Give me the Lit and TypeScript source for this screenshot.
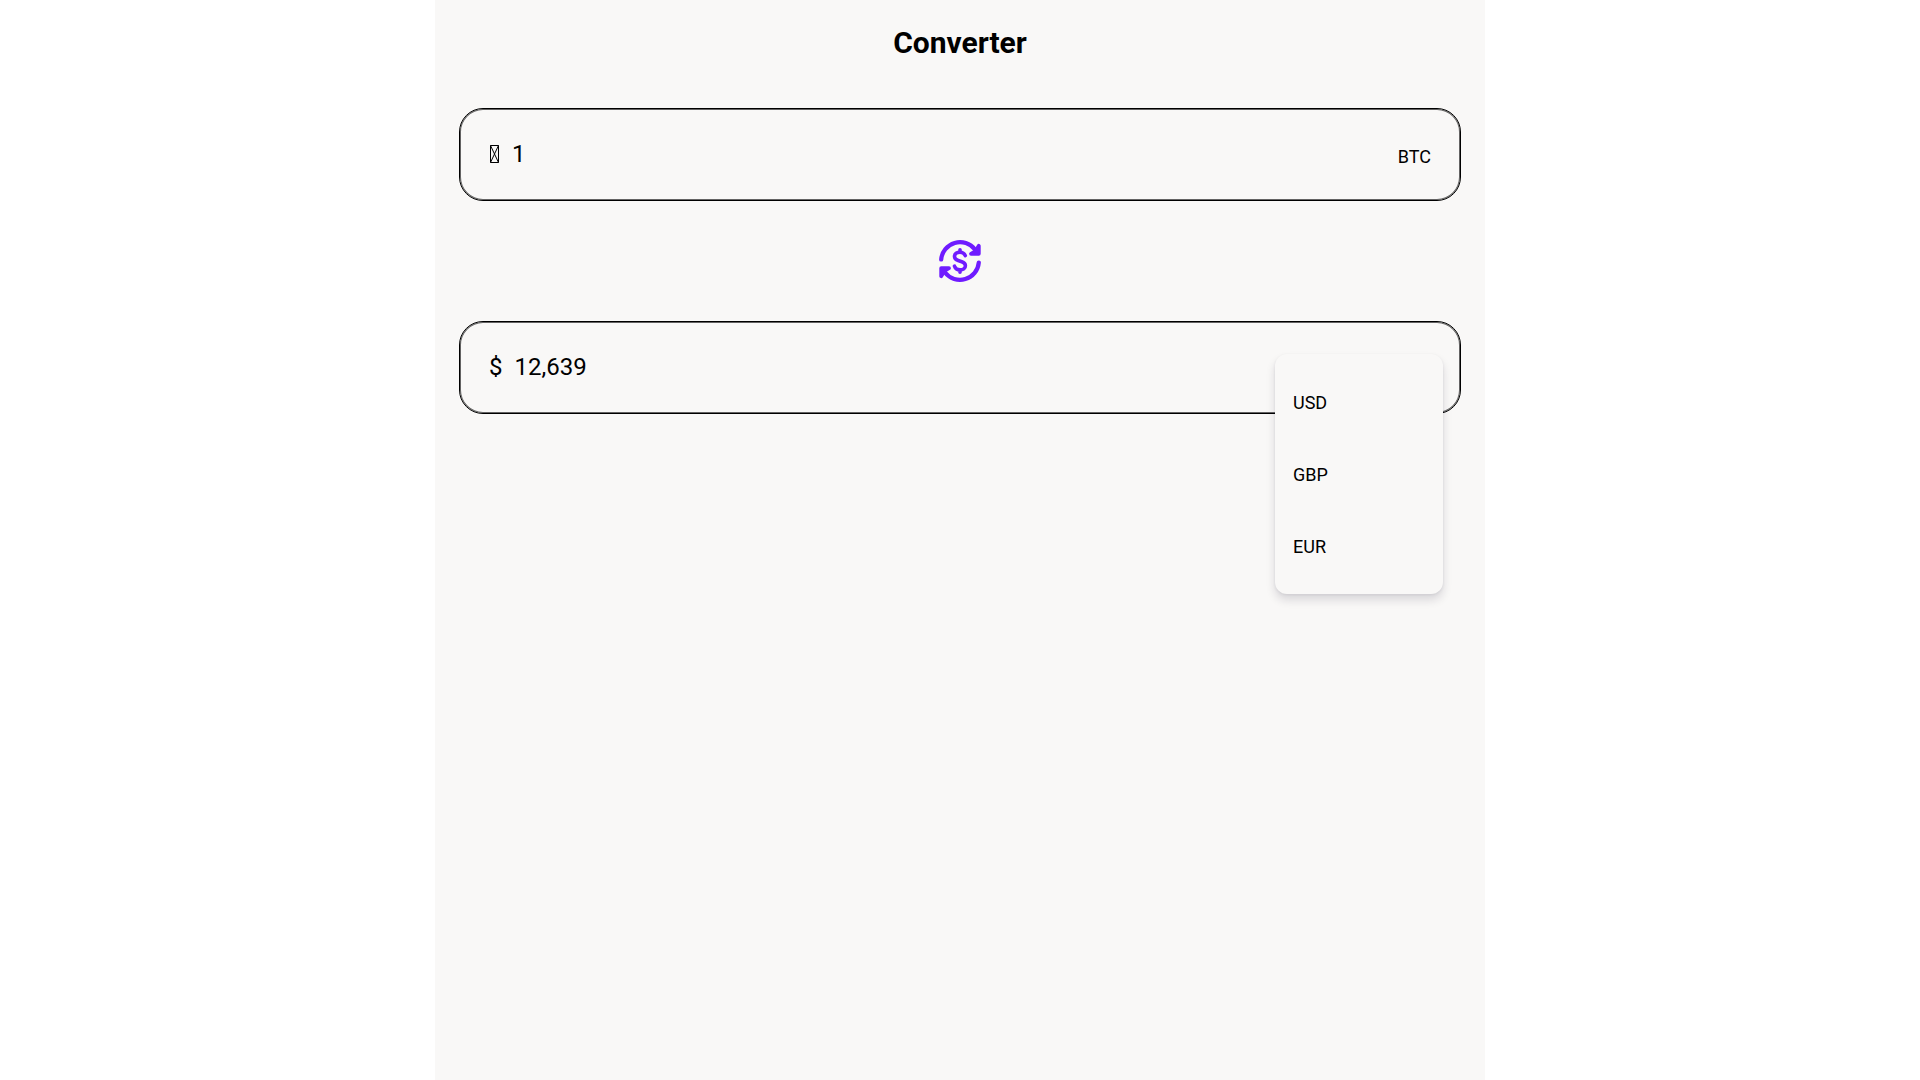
import { LitElement, html, css, svg } from "lit";
import { customElement, state } from "lit/decorators.js";

const CURRENCIES = ["USD", "GBP", "EUR"];

// Half of the exchange icon: one arc ending in an arrow head.
const arrow = svg`
  <path d="M2.200 19.500A18.900 18.900 0 0 1 36 9.500" />
  <path class="head" d="M39.800 5.800V13.800H32L36.500 11Z" />
`;

@customElement("app-root")
export class AppRoot extends LitElement {
  @state() private amount = "1";
  @state() private converted = "12,639";
  @state() private currency = "USD";

  static styles = css`
    :host {
      display: flex;
      justify-content: center;
      min-height: 100vh;
      background: #fff;
      color: #000;
      font-family: Roboto, "Liberation Sans", sans-serif;
    }
    * {
      box-sizing: border-box;
    }
    .panel {
      display: flex;
      flex-direction: column;
      width: 100%;
      max-width: 1050px;
      padding: 24px;
      background: #f9f8f7;
    }
    .title {
      margin: 0 0 46px;
      font-size: 30px;
      line-height: 38px;
      font-weight: 700;
      text-align: center;
    }
    .field {
      position: relative;
      display: flex;
      align-items: center;
      gap: 12px;
      height: 93px;
      padding: 0 29px 2px;
      border: 1px solid #000;
      border-radius: 24px;
      box-shadow: inset 0 0 0 1px rgb(0 0 0 / 60%);
      font-size: 24px;
      line-height: 28px;
    }
    .prefix {
      display: flex;
      flex: none;
    }
    .coin {
      display: block;
      width: 11px;
      height: 18px;
      fill: none;
      stroke: #000;
    }
    .value {
      flex: 1;
      min-width: 0;
      padding: 0;
      border: 0;
      outline: 0;
      background: none;
      color: inherit;
      font: inherit;
    }
    .unit {
      padding-top: 6px;
      font-size: 18px;
      line-height: 22px;
    }
    .swap {
      align-self: center;
      margin: 39px 0;
      padding: 0;
      border: 0;
      background: none;
      color: #6f1bff;
      cursor: pointer;
    }
    .swap-icon {
      display: block;
      width: 42px;
      height: 42px;
      fill: none;
      stroke: currentColor;
      stroke-width: 4.2;
      stroke-linecap: round;
      stroke-linejoin: round;
    }
    .head {
      fill: currentColor;
      stroke-width: 3.8;
    }
    .dollar {
      stroke-width: 3.6;
    }
    .menu {
      position: absolute;
      top: 32px;
      right: 17px;
      display: flex;
      flex-direction: column;
      width: 168px;
      padding: 12px 0;
      border-radius: 12px;
      background: #f9f8f7;
      box-shadow: 0 6px 10px rgb(30 20 50 / 14%), 0 1px 3px rgb(30 20 50 / 8%);
    }
    .option {
      height: 72px;
      padding: 2px 18px 0;
      border: 0;
      background: none;
      color: inherit;
      font: inherit;
      font-size: 18px;
      line-height: 22px;
      text-align: left;
      cursor: pointer;
    }
  `;

  private swap() {
    [this.amount, this.converted] = [this.converted, this.amount];
  }

  render() {
    return html`
      <main class="panel">
        <h1 class="title">Converter</h1>
        <div class="field">
          <label class="prefix" for="amount">
            <svg class="coin" viewBox="0 0 11 18" role="img" aria-label="Bitcoin">
              <path d="M1.500 .5H9.500V17.500H1.500ZM1.500 .5L9.500 17.500M9.500 .5L1.500 17.500" />
            </svg>
          </label>
          <input class="value" id="amount" .value=${this.amount} />
          <span class="unit">BTC</span>
        </div>
        <button class="swap" aria-label="Swap" @click=${this.swap}>
          <svg class="swap-icon" viewBox="0 0 42 42" aria-hidden="true">
            ${arrow}
            <g transform="rotate(180 21 21)">${arrow}</g>
            <path
              class="dollar"
              d="M26.300 15.600C25.400 13.400 23.600 12.200 21 12.200C18 12.200 15.500 13.700 15.500 16.500C15.500 18.900 17.200 19.800 19.200 20.500L22.800 21.800C25 22.600 26.400 23.700 26.400 25.700C26.400 28.400 24 29.900 21 29.900C18.300 29.900 16.300 28.600 15.500 26.200M21 9.700V12M21 30V32.300"
            />
          </svg>
        </button>
        <div class="field">
          <label class="prefix" for="converted">$</label>
          <input class="value" id="converted" .value=${this.converted} />
          <div class="menu" role="menu">
            ${CURRENCIES.map(
              (code) => html`
                <button
                  class="option"
                  role="menuitemradio"
                  aria-checked=${this.currency === code ? "true" : "false"}
                  @click=${() => (this.currency = code)}
                >
                  ${code}
                </button>
              `
            )}
          </div>
        </div>
      </main>
    `;
  }
}
